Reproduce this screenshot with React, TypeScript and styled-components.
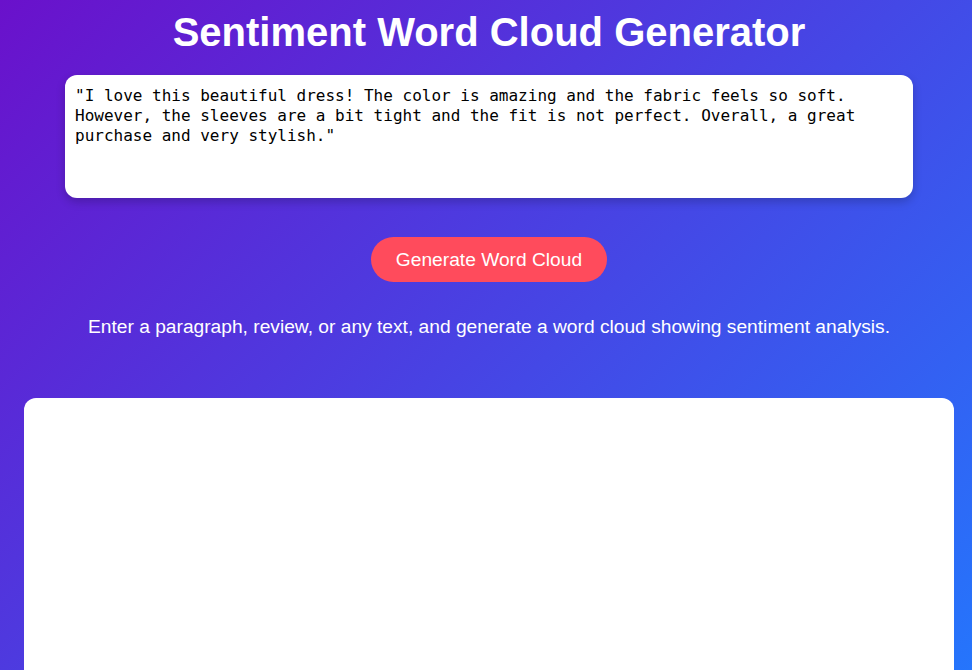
import React from "react";
import styled, { createGlobalStyle } from "styled-components";

const Global = createGlobalStyle`
  html, body { margin: 0; padding: 0; }
  body {
    min-height: 670px;
    background: linear-gradient(135deg, #6a11cb 0%, #2575fc 100%);
    background-attachment: fixed;
    font-family: "Liberation Sans", Arial, sans-serif;
    color: #fff;
    overflow: hidden;
  }
`;

const Page = styled.div`
  display: flex;
  flex-direction: column;
  align-items: center;
  padding: 9px 18px 0 24px;
`;

const Title = styled.h1`
  margin: 0;
  font-size: 40px;
  line-height: 46px;
  font-weight: 700;
  text-align: center;
`;

const Input = styled.textarea`
  box-sizing: border-box;
  margin-top: 20px;
  width: 848px;
  height: 123px;
  padding: 11px 10px 10px;
  border: none;
  border-radius: 12px;
  box-shadow: 0 4px 10px rgba(0, 0, 0, 0.2);
  font-family: "DejaVu Sans Mono", monospace;
  font-size: 16px;
  line-height: 20px;
  color: #000;
  background: #fff;
  resize: none;
  outline: none;
`;

const Button = styled.button`
  margin-top: 39px;
  width: 236px;
  height: 45px;
  border: none;
  border-radius: 23px;
  background: #ff4b5c;
  color: #fff;
  font-family: "Liberation Sans", Arial, sans-serif;
  font-size: 19.2px;
  cursor: pointer;
`;

const Hint = styled.p`
  margin: 33px 0 0;
  font-size: 19.2px;
  line-height: 23px;
  text-align: center;
`;

const Cloud = styled.div`
  margin-top: 60px;
  align-self: stretch;
  height: 400px;
  background: #fff;
  border-radius: 12px;
`;

const text =
  '"I love this beautiful dress! The color is amazing and the fabric feels so soft. However, the sleeves are a bit tight and the fit is not perfect. Overall, a great purchase and very stylish."';

export default function App() {
  return (
    <>
      <Global />
      <Page>
        <Title>Sentiment Word Cloud Generator</Title>
        <Input defaultValue={text} spellCheck={false} />
        <Button>Generate Word Cloud</Button>
        <Hint>
          Enter a paragraph, review, or any text, and generate a word cloud showing sentiment analysis.
        </Hint>
        <Cloud />
      </Page>
    </>
  );
}
